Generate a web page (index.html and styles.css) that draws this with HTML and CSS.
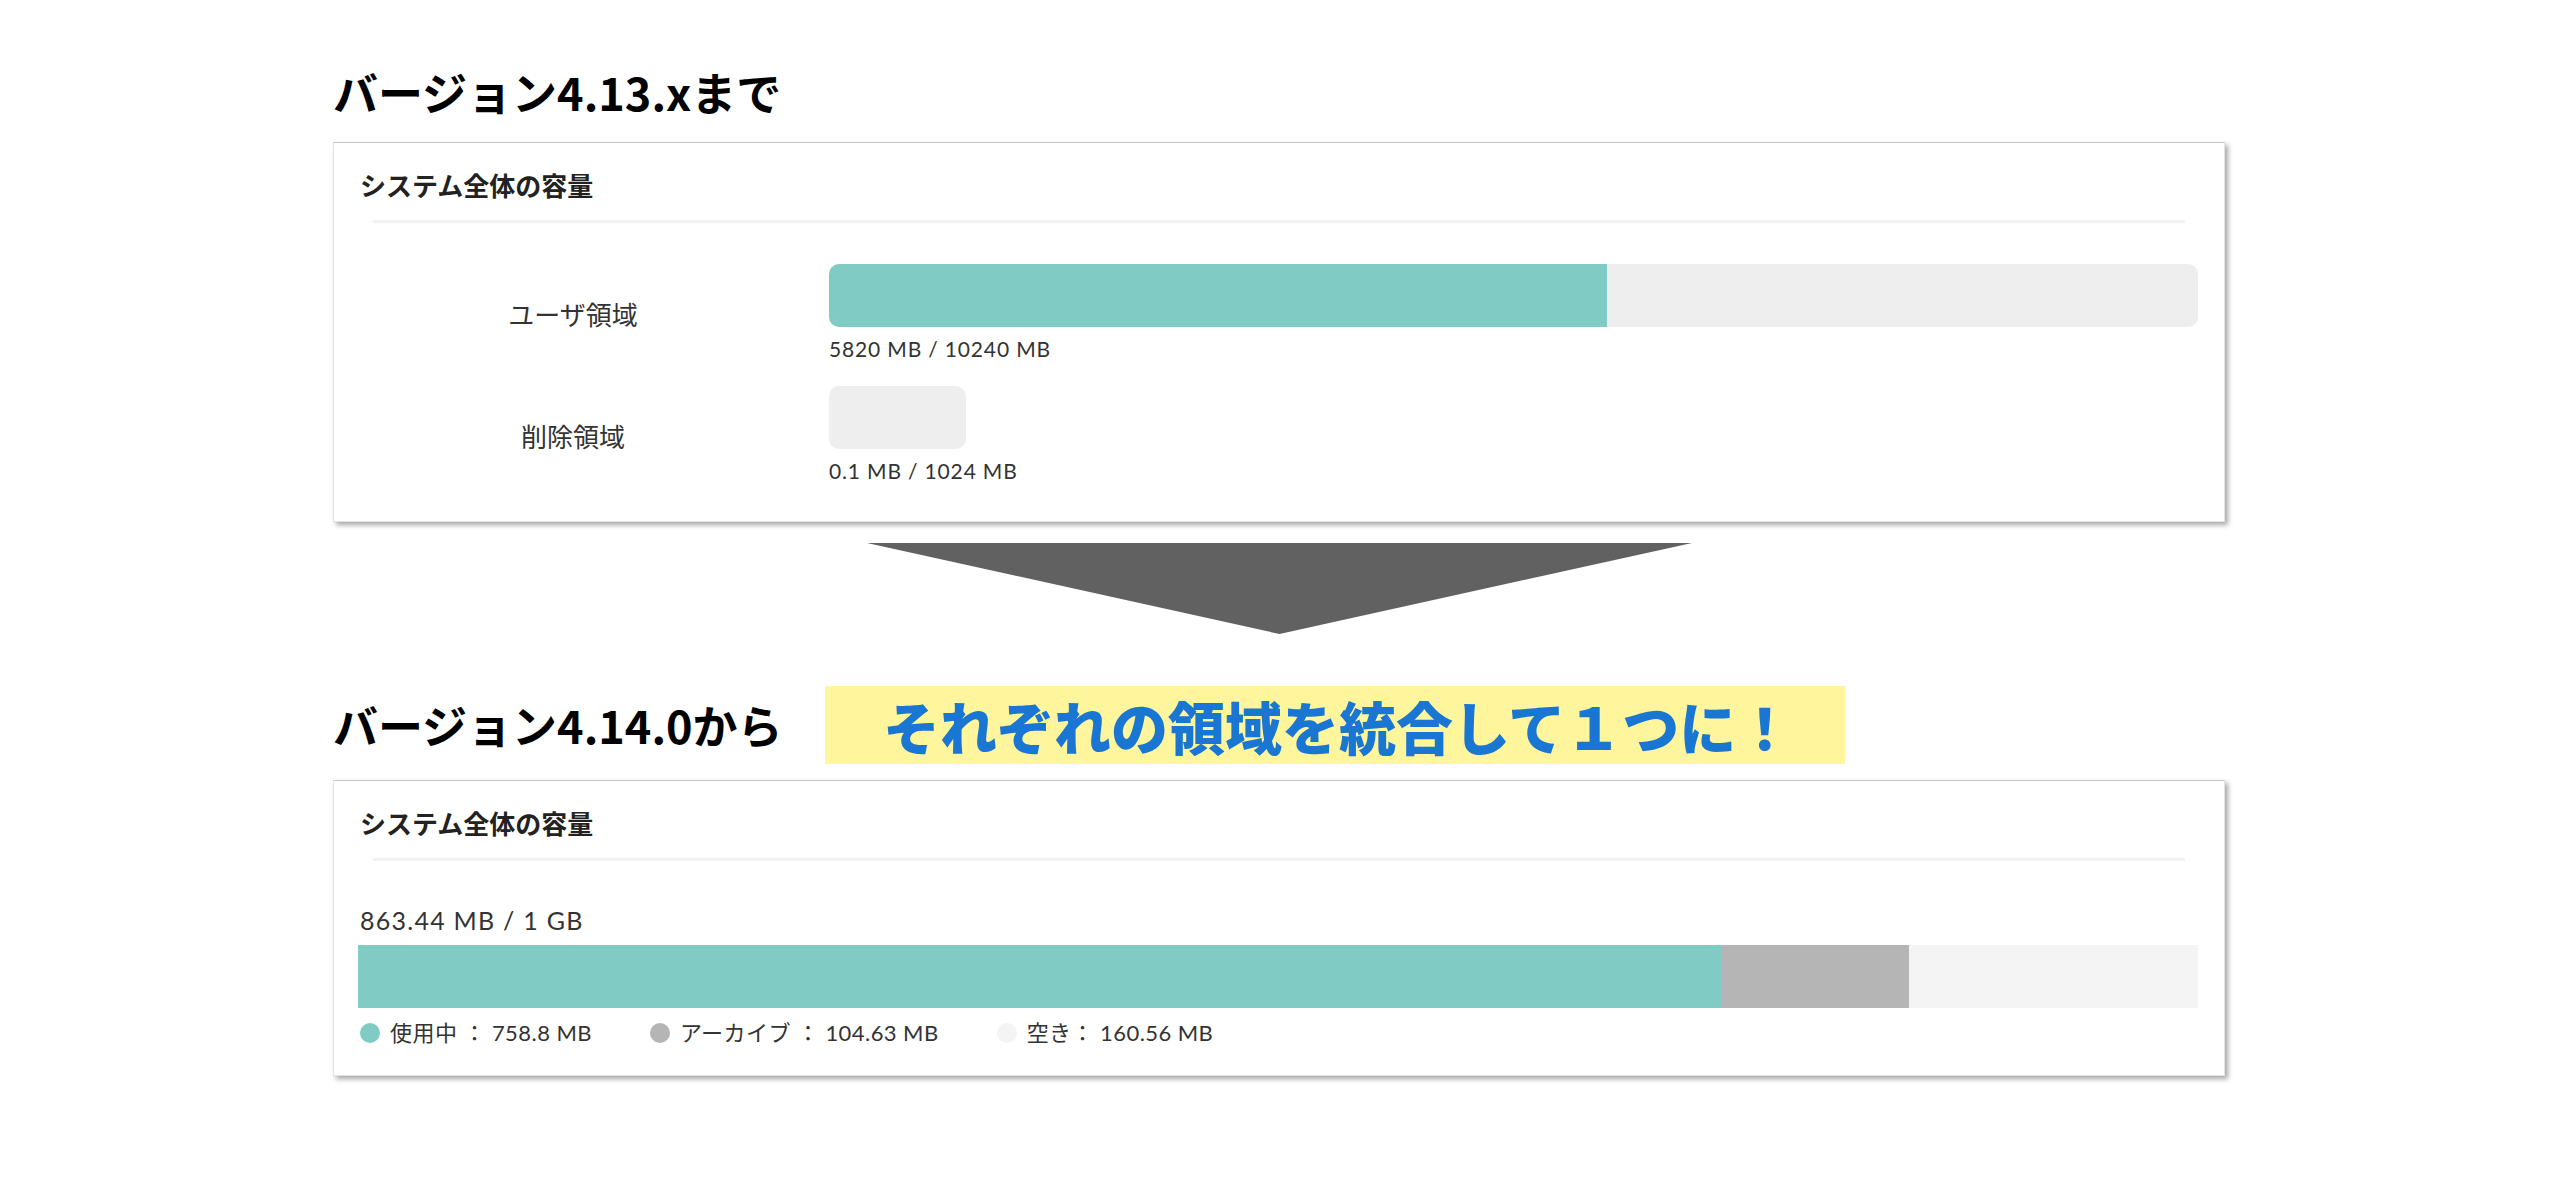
FILE: index.html
```html
<!DOCTYPE html>
<html lang="ja">
<head>
    <meta charset="UTF-8">
    <meta name="viewport" content="width=device-width, initial-scale=1.0">
    <title>システム全体の容量</title>
    <link rel="stylesheet" href="styles.css">
</head>
<body>

<div class="page">

    <h2 class="version">バージョン4.13.xまで</h2>

    <div class="card">
        <div class="card-title">システム全体の容量</div>
        <div class="divider"></div>

        <div class="usage-row first">
            <div class="usage-label">ユーザ領域</div>
            <div class="usage-bar">
                <div class="track"><div class="fill" style="width: 56.84%"></div></div>
                <div class="usage-text">5820 MB / 10240 MB</div>
            </div>
        </div>

        <div class="usage-row">
            <div class="usage-label">削除領域</div>
            <div class="usage-bar">
                <!-- track is sized against the user area (1024 / 10240) -->
                <div class="track" style="width: 10%"><div class="fill" style="width: 0.01%"></div></div>
                <div class="usage-text">0.1 MB / 1024 MB</div>
            </div>
        </div>
    </div>

    <div class="arrow">
        <svg width="825" height="91" viewBox="0 0 825 91">
            <polygon points="0,0 825,0 412.5,91" fill="#616161"/>
        </svg>
    </div>

    <div class="version-row">
        <h2 class="version">バージョン4.14.0から</h2>
        <div class="callout">それぞれの領域を統合して１つに！</div>
    </div>

    <div class="card">
        <div class="card-title">システム全体の容量</div>
        <div class="divider"></div>

        <div class="total-text">863.44 MB / 1 GB</div>
        <div class="stack">
            <div class="seg used" style="width: 74.10%"></div>
            <div class="seg archive" style="width: 10.22%"></div>
            <div class="seg free" style="width: 15.68%"></div>
        </div>
        <div class="legend">
            <div class="legend-item"><span class="dot used"></span>使用中 ： 758.8 MB</div>
            <div class="legend-item"><span class="dot archive"></span>アーカイブ ： 104.63 MB</div>
            <div class="legend-item"><span class="dot free"></span>空き： 160.56 MB</div>
        </div>
    </div>

</div>

</body>
</html>
```

FILE: styles.css
```css
body {
    margin: 0;
    background-color: #fff;
    font-family: Lato, "Noto Sans CJK JP", sans-serif;
    color: #333;
}

.page {
    padding: 62px 0 40px 333px;
    width: 1892px;
}

.version {
    margin: 0;
    font-family: "Noto Sans CJK JP", sans-serif;
    font-size: 45px;
    line-height: 60px;
    font-weight: 700;
    color: #000;
}

.card {
    margin-top: 20px;
    box-sizing: border-box;
    width: 1892px;
    padding: 24px 26px 36px;
    background-color: #fff;
    border: 1px solid #e4e4e4;
    border-top-color: #c6c6c6;
    box-shadow: 3px 3px 5px rgba(0, 0, 0, 0.35);
}

.card-title {
    font-family: "Noto Sans CJK JP", sans-serif;
    font-size: 26px;
    line-height: 36px;
    font-weight: 700;
    color: #222;
}

.divider {
    height: 3px;
    margin: 17px 13px 0;
    background-color: #f2f2f2;
}

/* version 4.13 rows */

.usage-row {
    display: grid;
    grid-template-columns: 426px 1fr;
    column-gap: 43px;
    align-items: center;
    margin-top: 23px;
}

.usage-row.first {
    margin-top: 41px;
}

.usage-label {
    text-align: center;
    font-family: "Noto Sans CJK JP", sans-serif;
    font-size: 26px;
    line-height: 36px;
    color: #333;
}

.track {
    height: 63px;
    border-radius: 10px;
    background-color: #eeeeee;
    overflow: hidden;
}

.fill {
    height: 100%;
    background-color: #80cbc4;
}

.usage-text {
    margin-top: 8px;
    font-size: 21px;
    line-height: 28px;
    letter-spacing: 0.04em;
    color: #333;
}

/* arrow between versions */

.arrow {
    display: flex;
    justify-content: center;
    margin-top: 21px;
}

.arrow svg {
    display: block;
}

.version-row {
    display: flex;
    align-items: center;
    margin-top: 52px;
}

.version-row .version {
    flex: 0 0 492px;
}

.callout {
    height: 78px;
    padding: 0 52px 0 58px;
    display: flex;
    align-items: center;
    background-color: #fff59d;
    color: #1976d2;
    font-family: "Noto Sans CJK JP", sans-serif;
    font-size: 57px;
    font-weight: 900;
    line-height: 78px;
}

.version-row + .card {
    margin-top: 16px;
    padding-bottom: 27px;
}

/* version 4.14 stacked bar */

.total-text {
    margin-top: 43px;
    font-size: 25px;
    line-height: 32px;
    letter-spacing: 0.05em;
    color: #333;
}

.stack {
    display: flex;
    height: 63px;
    margin-top: 9px;
    margin-left: -2px;
}

.seg.used, .dot.used {
    background-color: #80cbc4;
}

.seg.archive, .dot.archive {
    background-color: #b5b5b5;
}

.seg.free, .dot.free {
    background-color: #f4f4f4;
}

.legend {
    display: flex;
    gap: 58px;
    margin-top: 10px;
}

.legend-item {
    display: flex;
    align-items: center;
    gap: 10px;
    font-size: 22px;
    line-height: 30px;
    letter-spacing: 0.02em;
    color: #333;
}

.dot {
    width: 20px;
    height: 20px;
    border-radius: 50%;
}
```
